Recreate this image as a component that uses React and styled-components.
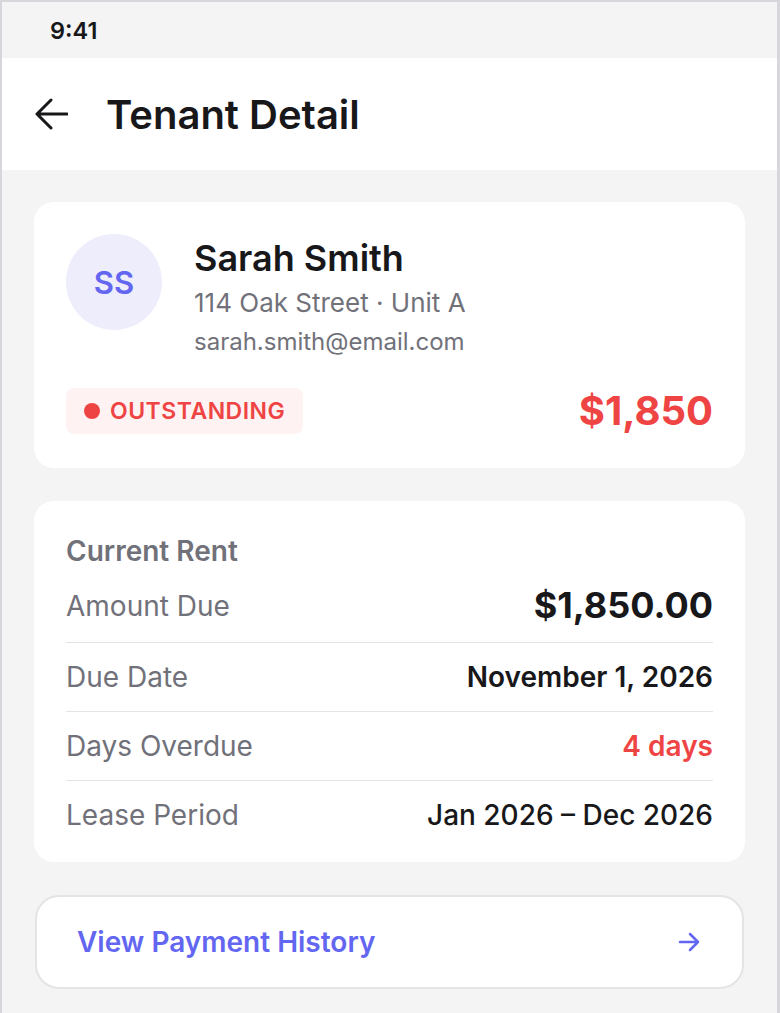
import styled, { createGlobalStyle } from "styled-components";

const GlobalStyle = createGlobalStyle`
  * { box-sizing: border-box; }
  body {
    margin: 0;
    font-family: Inter, "Noto Sans", sans-serif;
    background: #f4f4f5;
  }
`;

const Frame = styled.div`
  width: 780px;
  min-height: 1013px;
  border-top: 2px solid #d6d6db;
  border-left: 2px solid #d6d6db;
  border-right: 3px solid #d6d6db;
  background: #f4f4f5;
  display: flex;
  flex-direction: column;
`;

const StatusBar = styled.div`
  height: 56px;
  padding-left: 48px;
  display: flex;
  align-items: center;
  font-size: 23.5px;
  font-weight: 600;
  color: #18181b;
`;

const Header = styled.header`
  height: 112px;
  background: #fff;
  display: flex;
  align-items: center;
  padding-left: 32px;
  gap: 38px;
`;

const BackButton = styled.button`
  border: none;
  background: none;
  padding: 0;
  display: flex;
  cursor: pointer;
  color: #18181b;
`;

const Title = styled.h1`
  margin: 0;
  font-size: 40px;
  font-weight: 600;
  color: #18181b;
`;

const Content = styled.main`
  padding: 32px;
  display: flex;
  flex-direction: column;
  gap: 33px;
`;

const Card = styled.section`
  background: #fff;
  border-radius: 20px;
  padding: ${(p) => p.$padding || "32px"};
`;

const Profile = styled.div`
  display: flex;
  gap: 32px;
`;

const Avatar = styled.div`
  width: 96px;
  height: 96px;
  border-radius: 50%;
  background: #ededfb;
  color: #6366f1;
  font-size: 31px;
  font-weight: 600;
  display: flex;
  align-items: center;
  justify-content: center;
  flex-shrink: 0;
`;

const Info = styled.div`
  display: flex;
  flex-direction: column;
`;

const Name = styled.div`
  font-size: 36px;
  font-weight: 600;
  color: #18181b;
  line-height: 44px;
  margin-top: 2px;
`;

const Muted = styled.div`
  color: #71717a;
  font-size: ${(p) => p.$size}px;
  line-height: ${(p) => p.$line}px;
  margin-top: 5px;
`;

const StatusRow = styled.div`
  display: flex;
  justify-content: space-between;
  align-items: center;
  margin-top: 28px;
`;

const Badge = styled.div`
  display: flex;
  align-items: center;
  gap: 10px;
  height: 46px;
  padding: 0 18px;
  background: #fef2f2;
  border-radius: 8px;
  color: #ef4444;
  font-size: 23px;
  font-weight: 600;
  letter-spacing: 0.5px;
`;

const Dot = styled.span`
  width: 16px;
  height: 16px;
  border-radius: 50%;
  background: #ef4444;
`;

const Amount = styled.div`
  font-size: 40px;
  font-weight: 700;
  color: #ef4444;
`;

const SectionTitle = styled.div`
  font-size: 28px;
  font-weight: 600;
  color: #71717a;
  line-height: 36px;
`;

const Row = styled.div`
  display: flex;
  justify-content: space-between;
  align-items: center;
  padding: 16px 0;
  border-bottom: 1px solid #e4e4e7;

  &:last-child {
    border-bottom: none;
    padding-bottom: 0;
  }
`;

const Label = styled.span`
  font-size: 28px;
  line-height: 36px;
  color: #71717a;
`;

const Value = styled.span`
  font-size: ${(p) => p.$size || 28}px;
  line-height: ${(p) => (p.$size ? 41 : 36)}px;
  font-weight: ${(p) => p.$weight || 600};
  color: ${(p) => p.$color || "#18181b"};
`;

const HistoryButton = styled.button`
  height: 94px;
  margin: 0 1px;
  background: #fff;
  border: 2px solid #e4e4e7;
  border-radius: 24px;
  display: flex;
  align-items: center;
  justify-content: space-between;
  padding: 0 42px 0 40px;
  font-family: inherit;
  font-size: 28px;
  font-weight: 600;
  color: #6366f1;
  cursor: pointer;
`;

const rows = [
  { label: "Amount Due", value: "$1,850.00", size: 36, weight: 700 },
  { label: "Due Date", value: "November 1, 2026" },
  { label: "Days Overdue", value: "4 days", color: "#ef4444" },
  { label: "Lease Period", value: "Jan 2026 – Dec 2026", weight: 500 },
];

export default function App() {
  return (
    <>
      <GlobalStyle />
      <Frame>
        <StatusBar>9:41</StatusBar>
        <Header>
          <BackButton aria-label="Back">
            <svg width="34" height="32" viewBox="0 0 34 32" fill="none">
              <path
                d="M3 16H33M17 2L3 16L17 30"
                stroke="currentColor"
                strokeWidth="3"
                strokeLinecap="round"
                strokeLinejoin="round"
              />
            </svg>
          </BackButton>
          <Title>Tenant Detail</Title>
        </Header>
        <Content>
          <Card $padding="32px 32px 33px">
            <Profile>
              <Avatar>SS</Avatar>
              <Info>
                <Name>Sarah Smith</Name>
                <Muted $size={26} $line={36}>114 Oak Street · Unit A</Muted>
                <Muted $size={24} $line={32}>sarah.smith@email.com</Muted>
              </Info>
            </Profile>
            <StatusRow>
              <Badge>
                <Dot />
                OUTSTANDING
              </Badge>
              <Amount>$1,850</Amount>
            </StatusRow>
          </Card>
          <Card $padding="32px 32px 29px">
            <SectionTitle>Current Rent</SectionTitle>
            {rows.map((r) => (
              <Row key={r.label}>
                <Label>{r.label}</Label>
                <Value $size={r.size} $weight={r.weight} $color={r.color}>
                  {r.value}
                </Value>
              </Row>
            ))}
          </Card>
          <HistoryButton>
            View Payment History
            <svg width="22" height="20" viewBox="0 0 22 20" fill="none">
              <path
                d="M2 10H20M12 2L20 10L12 18"
                stroke="currentColor"
                strokeWidth="2.5"
                strokeLinecap="round"
                strokeLinejoin="round"
              />
            </svg>
          </HistoryButton>
        </Content>
      </Frame>
    </>
  );
}
